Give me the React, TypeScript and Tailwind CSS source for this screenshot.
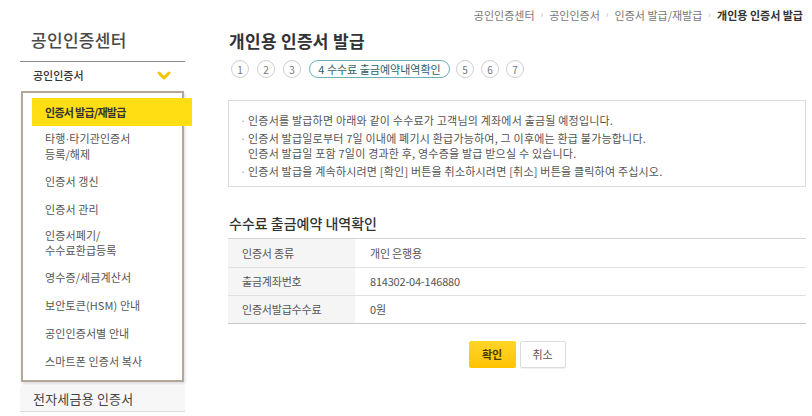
import React from "react";

const FONT = { fontFamily: '"Noto Sans CJK KR", "Noto Sans", sans-serif' };

const subItems: { label: React.ReactNode[]; active?: boolean }[] = [
  { label: ["인증서 발급/재발급"], active: true },
  {
    label: [
      <>
        타행<span style={{ fontFamily: '"Liberation Sans", sans-serif' }}>·</span>타기관인증서
      </>,
      "등록/해제",
    ],
  },
  { label: ["인증서 갱신"] },
  { label: ["인증서 관리"] },
  { label: ["인증서폐기/", "수수료환급등록"] },
  { label: ["영수증/세금계산서"] },
  { label: ["보안토큰(HSM) 안내"] },
  { label: ["공인인증서별 안내"] },
  { label: ["스마트폰 인증서 복사"] },
];

function Sidebar() {
  return (
    <div className="ml-[20px] w-[165px] flex flex-col shrink-0">
      <div className="pt-[30px] pb-[11px] pl-[11px] border-b border-[#8c8c8c]">
        <div className="text-[17px] leading-[20px] font-medium text-[#4a4a4a] tracking-[0.3px]">공인인증센터</div>
      </div>
      <div className="h-[27px] flex items-center justify-between pl-[13px] pr-[14px]">
        <span className="text-[11px] font-medium text-[#333] tracking-[0px]">공인인증서</span>
        <svg width="14" height="9" viewBox="0 0 14 9">
          <polyline points="2,2 7,7 12,2" fill="none" stroke="#f5c400" strokeWidth="3" strokeLinecap="round" strokeLinejoin="round" />
        </svg>
      </div>
      <div className="mt-[2px] ml-[1px] w-[163px] border-2 border-[#b3a898] shadow-[1px_2px_3px_rgba(0,0,0,0.15)] pt-[5px] pb-[5px]">
        {subItems.map((it, i) => (
          <div
            key={i}
            className={
              "ml-[9px] -mr-[10px] pl-[13px] text-[11px] " +
              (it.label.length > 1 ? "py-[5px] leading-[15px] " : "py-[8px] leading-[12px] ") +
              (it.active ? "bg-[#ffde14] font-bold text-[#333] tracking-[-0.7px]" : "text-[#555] tracking-[0.1px]")
            }
          >
            {it.label.map((l, j) => (
              <div key={j}>{l}</div>
            ))}
          </div>
        ))}
      </div>
      <div className="mt-[4px] h-[26px] bg-[#f7f7f7] border-b border-[#dcdcdc] flex items-center pl-[13px] text-[13px] text-[#444] tracking-[0.2px]">
        전자세금용 인증서
      </div>
    </div>
  );
}

function Sep() {
  return <span className="mx-[6px] text-[#bbb] text-[9px]">›</span>;
}

function Steps() {
  const circle = (n: number) => (
    <div key={n} className="w-[18px] h-[18px] rounded-full border border-[#cfcfcf] flex items-center justify-center text-[10px] text-[#777]">
      {n}
    </div>
  );
  return (
    <div className="mt-[8px] ml-[3px] flex items-center gap-[8px] h-[18px]">
      {circle(1)}
      {circle(2)}
      {circle(3)}
      <div className="h-[18px] w-[141px] rounded-full border-[1.5px] border-[#6cb0bb] flex items-center justify-center text-[11px] text-[#2e5e6b] tracking-[0px]">
        4 수수료 출금예약내역확인
      </div>
      <div className="flex gap-[7px] -ml-[2px]">
        {circle(5)}
        {circle(6)}
        {circle(7)}
      </div>
    </div>
  );
}

function Bullet({ children }: { children: React.ReactNode }) {
  return (
    <div className="flex">
      <span className="w-[8px] shrink-0 text-[#aaa]">·</span>
      <div>{children}</div>
    </div>
  );
}

function Main() {
  const rows = [
    ["인증서 종류", "개인 은행용"],
    ["출금계좌번호", "814302-04-146880"],
    ["인증서발급수수료", "0원"],
  ];
  return (
    <div className="ml-[43px] w-[578px] flex flex-col shrink-0">
      <div className="h-[30px] flex items-center justify-end pr-[3px] text-[11px] text-[#777] tracking-[0px]">
        <span>공인인증센터</span>
        <Sep />
        <span>공인인증서</span>
        <Sep />
        <span>인증서 발급/재발급</span>
        <Sep />
        <span className="font-bold text-[#333]">개인용 인증서 발급</span>
      </div>
      <div className="pl-[1px] text-[17px] leading-[22px] font-bold text-[#333] tracking-[0.3px]">개인용 인증서 발급</div>
      <Steps />
      <div className="mt-[22px] h-[87px] border border-[#dcdcdc] pt-[12px] pl-[11px] flex flex-col gap-[3px] text-[11px] leading-[15px] text-[#555] tracking-[0.2px]">
        <Bullet>인증서를 발급하면 아래와 같이 수수료가 고객님의 계좌에서 출금될 예정입니다.</Bullet>
        <Bullet>
          <div>인증서 발급일로부터 7일 이내에 폐기시 환급가능하여, 그 이후에는 환급 불가능합니다.</div>
          <div>인증서 발급일 포함 7일이 경과한 후, 영수증을 발급 받으실 수 있습니다.</div>
        </Bullet>
        <Bullet>인증서 발급을 계속하시려면 [확인] 버튼을 취소하시려면 [취소] 버튼을 클릭하여 주십시오.</Bullet>
      </div>
      <div className="mt-[27px] pl-[1px] text-[14px] leading-[19px] font-medium text-[#333] tracking-[0px]">
        수수료 출금예약 내역확인
      </div>
      <div className="mt-[5px] border-t border-[#d5d5d5] border-b border-b-[#c8c8c8]">
        {rows.map((r, i) => (
          <div key={i} className={"flex h-[28px] text-[11px] tracking-[-0.2px] " + (i > 0 ? "border-t border-[#e0e0e0]" : "")}>
            <div className="w-[127px] bg-[#f5f5f5] flex items-center pl-[14px] text-[#555]">{r[0]}</div>
            <div className="flex items-center pl-[15px] text-[#555]">{r[1]}</div>
          </div>
        ))}
      </div>
      <div className="mt-[17px] flex justify-center gap-[4px]">
        <button className="w-[47px] h-[27px] bg-gradient-to-b from-[#ffd526] to-[#ffc200] text-[11px] font-bold text-[#4a3a00] rounded-[2px]">
          확인
        </button>
        <button className="w-[46px] h-[27px] bg-white border border-[#dcdcdc] text-[11px] text-[#555] rounded-[2px] shadow-[0_1px_1px_rgba(0,0,0,0.06)]">
          취소
        </button>
      </div>
    </div>
  );
}

export default function App() {
  return (
    <div className="w-[812px] h-[416px] overflow-hidden bg-white flex" style={FONT}>
      <Sidebar />
      <Main />
    </div>
  );
}
